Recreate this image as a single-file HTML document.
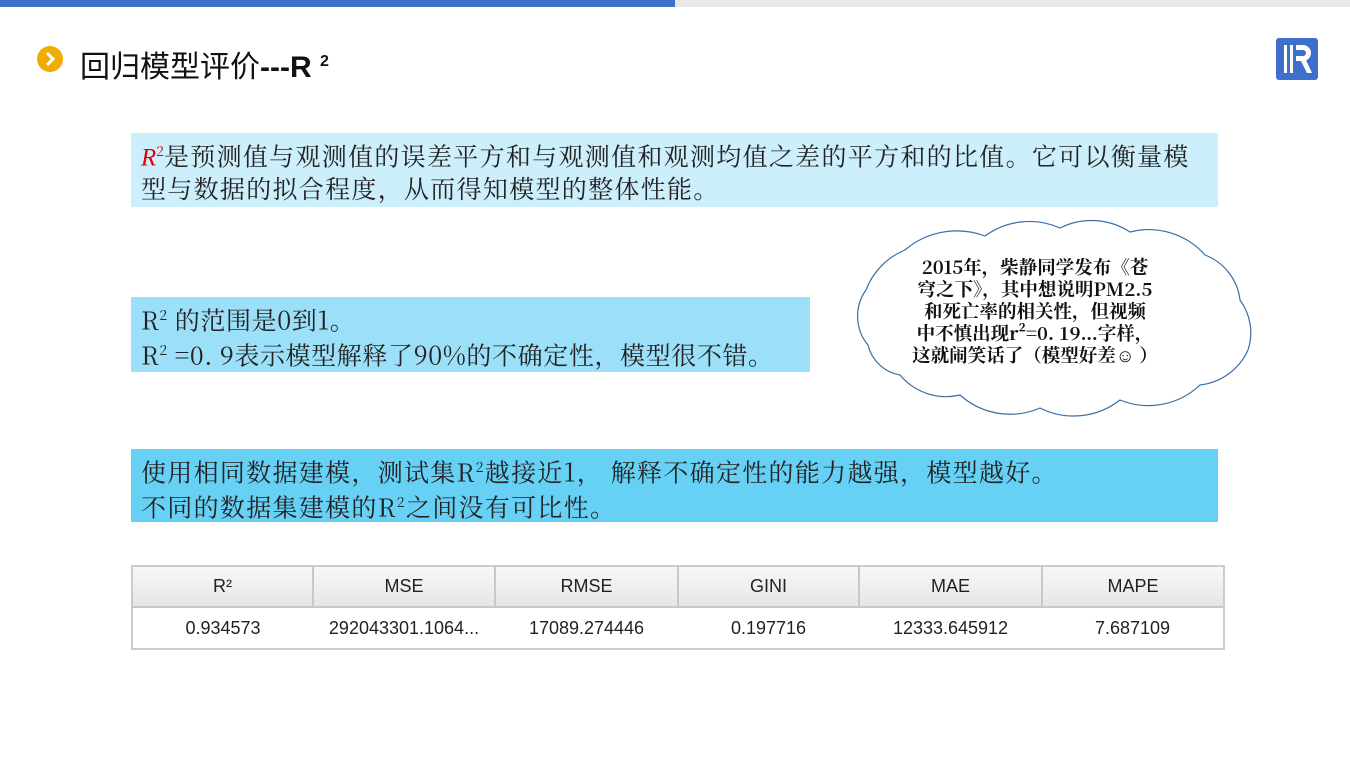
<!DOCTYPE html>
<html><head><meta charset="utf-8"><style>
body{margin:0;width:1350px;height:759px;background:#fff;position:relative;overflow:hidden;font-family:"Noto Serif CJK SC","Liberation Serif",serif;}
.bar1{position:absolute;left:0;top:0;width:675px;height:7px;background:#3d6fcb}
.bar2{position:absolute;left:675px;top:0;width:675px;height:7px;background:#e8e8e8}
.title{position:absolute;left:80px;top:40px;font-family:"Liberation Sans","Noto Sans CJK SC",sans-serif;font-size:30px;color:#111;line-height:44px}
.box{position:absolute;left:131px;font-size:25px;color:#222;line-height:31px;padding:3px 10px;box-sizing:border-box;white-space:nowrap;letter-spacing:1.3px}
table{position:absolute;left:131px;top:565px;width:1094px;border-collapse:collapse;font-family:"Liberation Sans",sans-serif;font-size:18px;color:#222;border:2px solid #ccc;table-layout:fixed}
th{font-weight:normal;height:37px;background:linear-gradient(#f8f8f8,#e6e6e6);border-right:2px solid #c8c8c8;border-bottom:2px solid #c8c8c8}
td{height:38px;text-align:center;background:#fff}
</style></head><body>
<div class="bar1"></div><div class="bar2"></div>
<svg style="position:absolute;left:36px;top:45px" width="28" height="28"><circle cx="14" cy="14" r="13" fill="#f0ac00"/><path d="M11 8 L17 14 L11 20" stroke="#fff" stroke-width="3" fill="none"/></svg>
<div class="title">回归模型评价<b style="font-family:'Liberation Sans',sans-serif">---R</b> <sup style="font-size:16px;font-weight:bold">2</sup></div>
<svg style="position:absolute;left:1276px;top:38px" width="42" height="42"><rect x="0" y="0" width="42" height="42" rx="3" fill="#3d6fcb"/><rect x="8" y="7" width="3" height="28" fill="#fff"/><rect x="14" y="7" width="3" height="28" fill="#fff"/><path d="M20 7 H27 A8 8 0 0 1 27 23 H20 V18 H27 A3 3 0 0 0 27 12 H20Z" fill="#fff"/><path d="M25 23 L31 35 H36 L30 22Z" fill="#fff"/></svg>
<div class="box" style="top:133px;width:1087px;height:74px;background:#cdeefb"><i style="color:#e00000;font-family:'Liberation Serif',serif;letter-spacing:0">R</i><sup style="color:#e00000;font-size:14px;letter-spacing:0">2</sup>是预测值与观测值的误差平方和与观测值和观测均值之差的平方和的比值。它可以衡量模<br>型与数据的拟合程度，从而得知模型的整体性能。</div>
<div class="box" style="top:297px;width:679px;height:75px;background:#9be0f8;letter-spacing:0.6px">R<sup style="font-size:14px">2</sup> 的范围是0到1。<br>R<sup style="font-size:14px">2</sup> =0. 9表示模型解释了90%的不确定性，模型很不错。</div>
<div class="box" style="top:449px;width:1087px;height:73px;background:#66d0f5">使用相同数据建模，测试集R<sup style="font-size:14px">2</sup>越接近1， 解释不确定性的能力越强，模型越好。<br>不同的数据集建模的R<sup style="font-size:14px">2</sup>之间没有可比性。</div>
<svg style="position:absolute;left:0;top:0" width="1350" height="759"><path d="M868 345 A45 45 0 0 1 866 290 A70 70 0 0 1 905 250 A80 80 0 0 1 985 236 A75 75 0 0 1 1060 228 A70 70 0 0 1 1130 232 A75 75 0 0 1 1205 255 A55 55 0 0 1 1240 300 A55 55 0 0 1 1248 350 A60 60 0 0 1 1200 385 A75 75 0 0 1 1120 400 A75 75 0 0 1 1040 408 A75 75 0 0 1 960 395 A60 60 0 0 1 900 375 A40 40 0 0 1 868 345Z" fill="#fff" stroke="#3a6ea5" stroke-width="1.2"/></svg>
<div style="position:absolute;left:880px;top:256px;width:310px;text-align:center;font-size:18.5px;line-height:22px;font-weight:bold;color:#111;white-space:nowrap">2015年，柴静同学发布《苍<br>穹之下》，其中想说明PM2.5<br>和死亡率的相关性，但视频<br>中不慎出现r²=0. 19…字样，<br>这就闹笑话了（模型好差☺ ）</div>
<table><colgroup><col style="width:181px"><col style="width:182px"><col style="width:183px"><col style="width:181px"><col style="width:183px"><col></colgroup><tr><th>R²</th><th>MSE</th><th>RMSE</th><th>GINI</th><th>MAE</th><th style="border-right:none">MAPE</th></tr>
<tr><td>0.934573</td><td>292043301.1064...</td><td>17089.274446</td><td>0.197716</td><td>12333.645912</td><td>7.687109</td></tr></table>
</body></html>
